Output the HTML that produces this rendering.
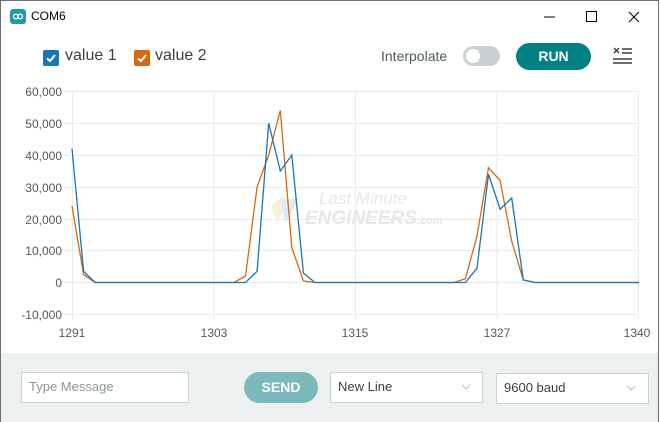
<!DOCTYPE html>
<html><head><meta charset="utf-8"><style>
*{margin:0;padding:0;box-sizing:border-box}
body{width:660px;height:422px;overflow:hidden;background:#fff;font-family:"Liberation Sans",sans-serif;position:relative}
.win{position:absolute;left:0;top:0;width:659px;height:422px;border:1px solid #6d6d6d;border-bottom:none;background:#fff;overflow:hidden}
.abs{position:absolute}
.t{font-size:12px;color:#000}
.cb{position:absolute;width:16px;height:16px;border-radius:2px}
.lbl{position:absolute;font-size:16px;color:#374146;top:46px}
.bottom{position:absolute;left:0;top:352px;width:659px;height:70px;background:#ecf0f1}
.inp{position:absolute;background:#fff;border:1px solid #c9d2d2;font-size:13px;color:#4e5b61;padding-left:7px;line-height:28px}
</style></head><body>
<div class="win">
 <svg class="abs" style="left:9px;top:8px" width="16" height="15"><rect width="16" height="15" rx="3" fill="#1e9aa8"/><circle cx="5.8" cy="7.5" r="2.3" fill="none" stroke="#fff" stroke-width="1.3"/><circle cx="10.2" cy="7.5" r="2.3" fill="none" stroke="#fff" stroke-width="1.3"/></svg>
 <div class="abs t" style="left:30px;top:8px">COM6</div>
 <svg class="abs" style="left:540px;top:8px" width="110" height="16"><line x1="3" y1="8" x2="14" y2="8" stroke="#000"/><rect x="45.5" y="2.5" width="10" height="10" fill="none" stroke="#000"/><path d="M88 3L98 13M98 3L88 13" stroke="#000"/></svg>

 <div class="cb" style="left:42px;top:49px;background:#1a75b5"></div>
 <svg class="abs" style="left:42px;top:49px" width="16" height="16"><path d="M4 8.5L7 11L12 5" stroke="#fff" stroke-width="2" fill="none"/></svg>
 <div class="lbl" style="left:64px">value 1</div>
 <div class="cb" style="left:133px;top:49px;background:#d8680f"></div>
 <svg class="abs" style="left:133px;top:49px" width="16" height="16"><path d="M4 8.5L7 11L12 5" stroke="#fff" stroke-width="2" fill="none"/></svg>
 <div class="lbl" style="left:154px">value 2</div>

 <div class="abs" style="left:380px;top:47px;font-size:14px;color:#4e5b61">Interpolate</div>
 <div class="abs" style="left:462px;top:45px;width:37px;height:20px;border-radius:10px;background:#c9d2d2"></div>
 <div class="abs" style="left:465px;top:48px;width:14px;height:14px;border-radius:7px;background:#fff"></div>
 <div class="abs" style="left:515px;top:42px;width:75px;height:27px;border-radius:14px;background:#008184;color:#fff;font-weight:bold;font-size:14px;text-align:center;line-height:27px">RUN</div>
 <svg class="abs" style="left:611px;top:45px" width="22" height="20"><path d="M2 2L7 7M7 2L2 7" stroke="#374146" stroke-width="1.4"/><path d="M10 3H20M10 7H20M1 13H20M1 17H20" stroke="#374146" stroke-width="1.4"/></svg>

 <svg class="abs" style="left:0;top:0" width="660" height="352" font-family="Liberation Sans, sans-serif" font-size="12" fill="#4e5b61">
  <g stroke="#e6ebeb" stroke-width="1">
   <path d="M63 90.5H638M63 122.5H638M63 154.5H638M63 186.5H638M63 218.5H638M63 249.5H638M63 281.5H638M63 313.5H638"/>
   <path d="M71.5 90V318M213 90V318M354.5 90V318M496 90V318M637.5 90V318"/>
  </g>
  <g text-anchor="end">
   <text x="61" y="95">60,000</text><text x="61" y="127">50,000</text><text x="61" y="159">40,000</text><text x="61" y="191">30,000</text><text x="61" y="223">20,000</text><text x="61" y="254">10,000</text><text x="61" y="286">0</text><text x="61" y="318">-10,000</text>
  </g>
  <g text-anchor="middle">
   <text x="71" y="336">1291</text><text x="213" y="336">1303</text><text x="354" y="336">1315</text><text x="496" y="336">1327</text><text x="636" y="336">1340</text>
  </g>
  <path d="M270 205L282 195L289 200L276 222Z" fill="#f6efd9"/>
  <path d="M280 198L298 198L284 222Z" fill="#dfeaf3"/>
  <text x="318" y="203" font-size="17" font-style="italic" fill="#e5e8e9">Last Minute</text>
  <text x="304" y="223" font-size="19" font-style="italic" font-weight="bold" fill="#e5e8e9">ENGINEERS<tspan font-size="11">.com</tspan></text>
  <polyline fill="none" stroke="#d8680f" stroke-width="1.3" points="71,205 82.6,273.5 94.1,281.5 233,281.5 244.5,275.1 256.1,185.9 267.7,154 279.3,109.5 290.8,246.5 302.4,279.9 314,281.5 452.8,281.5 464.4,277.7 476,235 487.5,166.8 499.1,179.5 510.7,240 522.3,279 533.8,281.5 638,281.5"/>
  <polyline fill="none" stroke="#1a75b5" stroke-width="1.3" points="71,147.7 82.6,270.3 94.1,281.5 244.5,281.5 256.1,270.3 267.7,122.2 279.3,170 290.8,154 302.4,272 314,281.5 464.4,281.5 476,267.2 487.5,173.2 499.1,208.2 510.7,197 522.3,279 533.8,281.5 638,281.5"/>
 </svg>

 <div class="bottom">
  <div class="inp" style="left:20px;top:19px;width:168px;height:31px;color:#8a979b">Type Message</div>
  <div class="abs" style="left:243px;top:19px;width:74px;height:31px;border-radius:16px;background:#7bb9bd;color:#fff;font-weight:bold;font-size:14px;text-align:center;line-height:31px">SEND</div>
  <div class="inp" style="left:329px;top:19px;width:153px;height:31px;color:#374146">New Line</div>
  <div class="inp" style="left:495px;top:20px;width:153px;height:31px;color:#374146">9600 baud</div>
  <svg class="abs" style="left:460px;top:30px" width="190" height="10"><path d="M1 2L5 6L9 2" stroke="#b5bfc1" fill="none"/><path d="M166 3L170 7L174 3" stroke="#b5bfc1" fill="none"/></svg>
 </div>
</div>
</body></html>
